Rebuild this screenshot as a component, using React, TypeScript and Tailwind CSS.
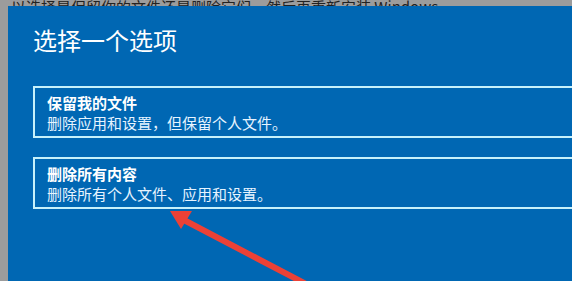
import React from "react";

const font = { fontFamily: '"Noto Sans CJK SC", "Noto Sans", sans-serif' };

function Option({ title, desc }: { title: string; desc: string }) {
  return (
    <div className="w-[600px] h-[52px] border-2 border-[#c6f1fb] pl-[12px] pt-[5px]">
      <div className="text-[15px] leading-[20px] font-bold text-white">{title}</div>
      <div className="text-[15px] leading-[20px] text-[#e6f4ff]">{desc}</div>
    </div>
  );
}

export default function App() {
  return (
    <div className="relative w-[572px] h-[281px] overflow-hidden bg-[#9c9c9c] flex flex-col" style={font}>
      <div className="h-[6px] overflow-hidden pl-[11px]">
        <div className="text-[15px] leading-[15px] text-[#222222] -mt-[1px] whitespace-nowrap">
          以选择是保留你的文件还是删除它们，然后再重新安装 Windows。
        </div>
      </div>
      <div className="flex-1 flex ml-[8px] bg-[#0067b3]">
        <div className="pl-[25px] pt-[18px] flex flex-col">
          <div className="text-[24px] leading-[32px] text-white font-normal">选择一个选项</div>
          <div className="mt-[30px] flex flex-col gap-[19px]">
            <Option title="保留我的文件" desc="删除应用和设置，但保留个人文件。" />
            <Option title="删除所有内容" desc="删除所有个人文件、应用和设置。" />
          </div>
        </div>
      </div>
      <svg className="absolute left-0 top-0 pointer-events-none" width="572" height="281" viewBox="0 0 572 281">
        <line x1="182" y1="219" x2="306" y2="284" stroke="#ec4136" strokeWidth="6" strokeLinecap="round" />
        <polygon points="170,211 192,211 181,229" fill="#ec4136" />
      </svg>
    </div>
  );
}
